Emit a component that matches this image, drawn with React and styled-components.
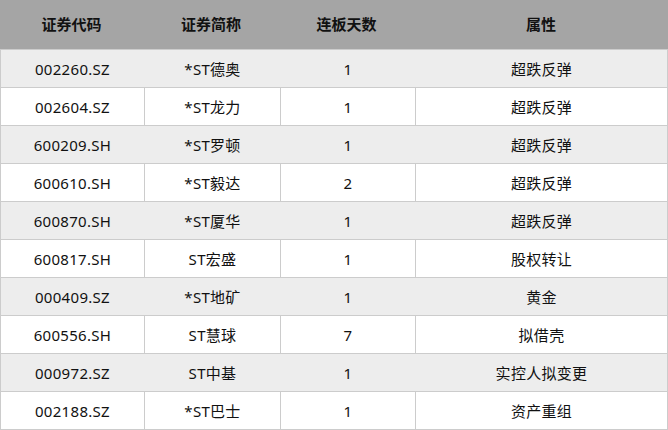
import React from 'react'
import styled, { createGlobalStyle } from 'styled-components'

const GlobalStyle = createGlobalStyle`
  body {
    margin: 0;
    background: #fff;
    font-family: "Noto Sans", "Noto Sans CJK SC", sans-serif;
  }
`

const Table = styled.div`
  width: 668px;
  box-sizing: border-box;
`

const cols = '143px 136px 135px 1fr'

const HeaderRow = styled.div`
  display: grid;
  grid-template-columns: ${cols};
  height: 49px;
  background: #a5a5a5;
`

const HeaderCell = styled.div`
  display: flex;
  align-items: center;
  justify-content: center;
  font-size: 15px;
  font-weight: 700;
  color: #111;
  padding-bottom: 2px;
`

const Row = styled.div`
  display: grid;
  grid-template-columns: ${cols};
  height: 38px;
  box-sizing: border-box;
  border: 1px solid #cccccc;
  border-bottom: none;
  background: ${p => (p.$striped ? '#ededed' : '#ffffff')};
  &:last-child {
    height: 39px;
    border-bottom: 1px solid #cccccc;
  }
`

const Cell = styled.div`
  display: flex;
  align-items: center;
  justify-content: center;
  font-size: 15px;
  color: #111;
  letter-spacing: 0.3px;
  border-left: 1px solid ${p => (p.$striped ? 'transparent' : '#cccccc')};
  &:first-child {
    border-left: none;
  }
`

const headers = ['证券代码', '证券简称', '连板天数', '属性']

const rows = [
  ['002260.SZ', '*ST德奥', '1', '超跌反弹'],
  ['002604.SZ', '*ST龙力', '1', '超跌反弹'],
  ['600209.SH', '*ST罗顿', '1', '超跌反弹'],
  ['600610.SH', '*ST毅达', '2', '超跌反弹'],
  ['600870.SH', '*ST厦华', '1', '超跌反弹'],
  ['600817.SH', 'ST宏盛', '1', '股权转让'],
  ['000409.SZ', '*ST地矿', '1', '黄金'],
  ['600556.SH', 'ST慧球', '7', '拟借壳'],
  ['000972.SZ', 'ST中基', '1', '实控人拟变更'],
  ['002188.SZ', '*ST巴士', '1', '资产重组'],
]

const App = () => (
  <>
    <GlobalStyle />
    <Table>
      <HeaderRow>
        {headers.map(h => <HeaderCell key={h}>{h}</HeaderCell>)}
      </HeaderRow>
      {rows.map((r, i) => (
        <Row key={r[0]} $striped={i % 2 === 0}>
          {r.map((c, j) => (
            <Cell key={j} $striped={i % 2 === 0}>{c}</Cell>
          ))}
        </Row>
      ))}
    </Table>
  </>
)

export default App
